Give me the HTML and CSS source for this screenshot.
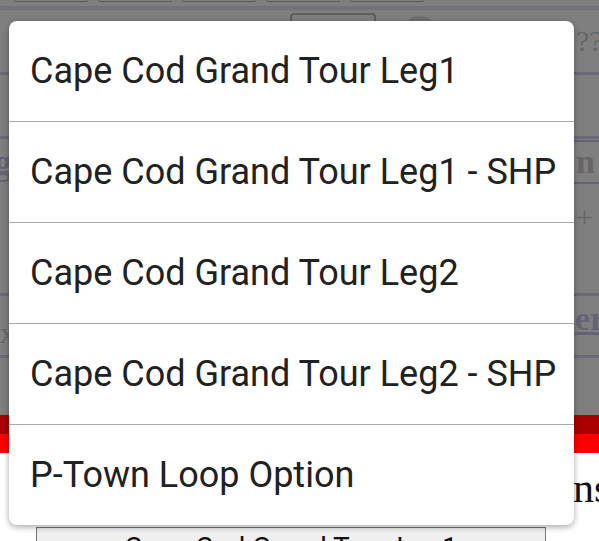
FILE: index.html
```html
<!DOCTYPE html>
<html>
<head>
<meta charset="utf-8">
<link rel="stylesheet" href="styles.css">
</head>
<body>
<div class="page">
  <div class="tabs">
    <span class="tab"></span><span class="tab"></span><span class="tab"></span><span class="tab"></span><span class="tab"></span>
  </div>
  <div class="topline"></div>
  <div class="toolrow">
    <span class="toolbox"></span>
    <span class="toolcircle"></span>
    <span class="qq">??</span>
  </div>
  <div class="rule"></div>
  <div class="blankrow"></div>
  <div class="rule"></div>
  <div class="namerow">
    <span class="gl">g</span>
    <span class="nbox">n</span>
  </div>
  <div class="plusrow"><span class="plus">+</span></div>
  <div class="rule"></div>
  <div class="errow"><span class="x">x</span><span class="er">er</span></div>
  <div class="rule"></div>
  <div class="redbar"><div class="red-dim"></div><div class="red"></div></div>
  <div class="textrow"><span class="ns">ns</span></div>
  <div class="btnrow"><button class="routebtn">Cape Cod Grand Tour Leg1</button></div>
</div>
<div class="scrim"></div>
<div class="dialog">
  <div class="item">Cape Cod Grand Tour Leg1</div>
  <div class="item">Cape Cod Grand Tour Leg1 - SHP</div>
  <div class="item">Cape Cod Grand Tour Leg2</div>
  <div class="item">Cape Cod Grand Tour Leg2 - SHP</div>
  <div class="item">P-Town Loop Option</div>
</div>
</body>
</html>
```
FILE: styles.css
```css
html, body {
  margin: 0;
  padding: 0;
  width: 599px;
  height: 541px;
  overflow: hidden;
  background: #ffffff;
}
.page {
  display: flex;
  flex-direction: column;
  width: 599px;
  font-family: "Liberation Serif", serif;
}
.page > * {
  flex-shrink: 0;
}
.tabs {
  display: flex;
  gap: 10px;
  height: 2px;
  padding-left: 14px;
  overflow: hidden;
}
.tab {
  width: 72px;
  height: 1px;
  border: 1px solid #bbbbbb;
  border-top: none;
  border-radius: 0 0 4px 4px;
}
.topline {
  margin-top: 4px;
  height: 4px;
  background: #e6e2fa;
}
.toolrow {
  height: 62px;
  position: relative;
}
.toolbox {
  position: absolute;
  left: 290px;
  top: 3px;
  width: 82px;
  height: 30px;
  border: 2px solid #bbbbbb;
  border-radius: 4px;
}
.toolcircle {
  position: absolute;
  left: 402px;
  top: 6px;
  width: 36px;
  height: 36px;
  border-radius: 50%;
  background: #dddddd;
}
.qq {
  position: absolute;
  left: 576px;
  top: 14px;
  font-size: 30px;
  color: #cccccc;
}
.rule {
  height: 3px;
  background: #d8d4f0;
}
.blankrow {
  height: 61px;
}
.namerow {
  height: 61px;
  position: relative;
}
.gl {
  position: absolute;
  left: -6px;
  top: 2px;
  font-size: 36px;
  font-weight: bold;
  color: #c8c8e8;
}
.nbox {
  position: absolute;
  left: 572px;
  top: 1px;
  width: 40px;
  height: 40px;
  border: 2px solid #c8c8e8;
  font-size: 34px;
  font-weight: bold;
  color: #cccccc;
  padding-left: 2px;
  line-height: 40px;
}
.plusrow {
  height: 93px;
  position: relative;
}
.plus {
  position: absolute;
  left: 576px;
  top: 0;
  font-size: 30px;
  color: #cccccc;
}
.errow {
  height: 59px;
  position: relative;
}
.x {
  position: absolute;
  left: 0;
  top: 20px;
  font-size: 30px;
  color: #cccccc;
}
.er {
  position: absolute;
  left: 575px;
  top: 4px;
  font-size: 34px;
  font-weight: bold;
  color: #c8c8e8;
  text-decoration: underline;
}
.redbar {
  margin-top: 57px;
  display: flex;
  flex-direction: column;
}
.red-dim {
  height: 19px;
  background: #aa0000;
}
.red {
  height: 19px;
  background: #ff0000;
}
.textrow {
  height: 74px;
  position: relative;
}
.ns {
  position: absolute;
  left: 573px;
  top: 14px;
  font-size: 42px;
  line-height: 42px;
  color: #111111;
}
.btnrow {
  padding-left: 36px;
}
.routebtn {
  width: 510px;
  height: 40px;
  background: #efefef;
  border: 1px solid #767676;
  font-family: "Roboto", sans-serif;
  font-size: 28px;
  color: #111111;
  padding: 0;
  line-height: 40px;
  white-space: nowrap;
}
.scrim {
  position: absolute;
  left: 0;
  top: 0;
  width: 599px;
  height: 415px;
  background: rgba(0, 0, 0, 0.5);
}
.dialog {
  position: absolute;
  left: 9px;
  top: 21px;
  width: 565px;
  height: 504px;
  background: #ffffff;
  border-radius: 8px;
  box-shadow: 0 2px 6px rgba(0, 0, 0, 0.35);
  display: flex;
  flex-direction: column;
  overflow: hidden;
  font-family: "Roboto", sans-serif;
}
.item {
  height: 100px;
  flex-shrink: 0;
  border-bottom: 1px solid #aaaaaa;
  display: flex;
  align-items: center;
  padding-left: 21px;
  font-size: 36px;
  color: #212121;
  white-space: nowrap;
}
.item:last-child {
  border-bottom: none;
}
```
